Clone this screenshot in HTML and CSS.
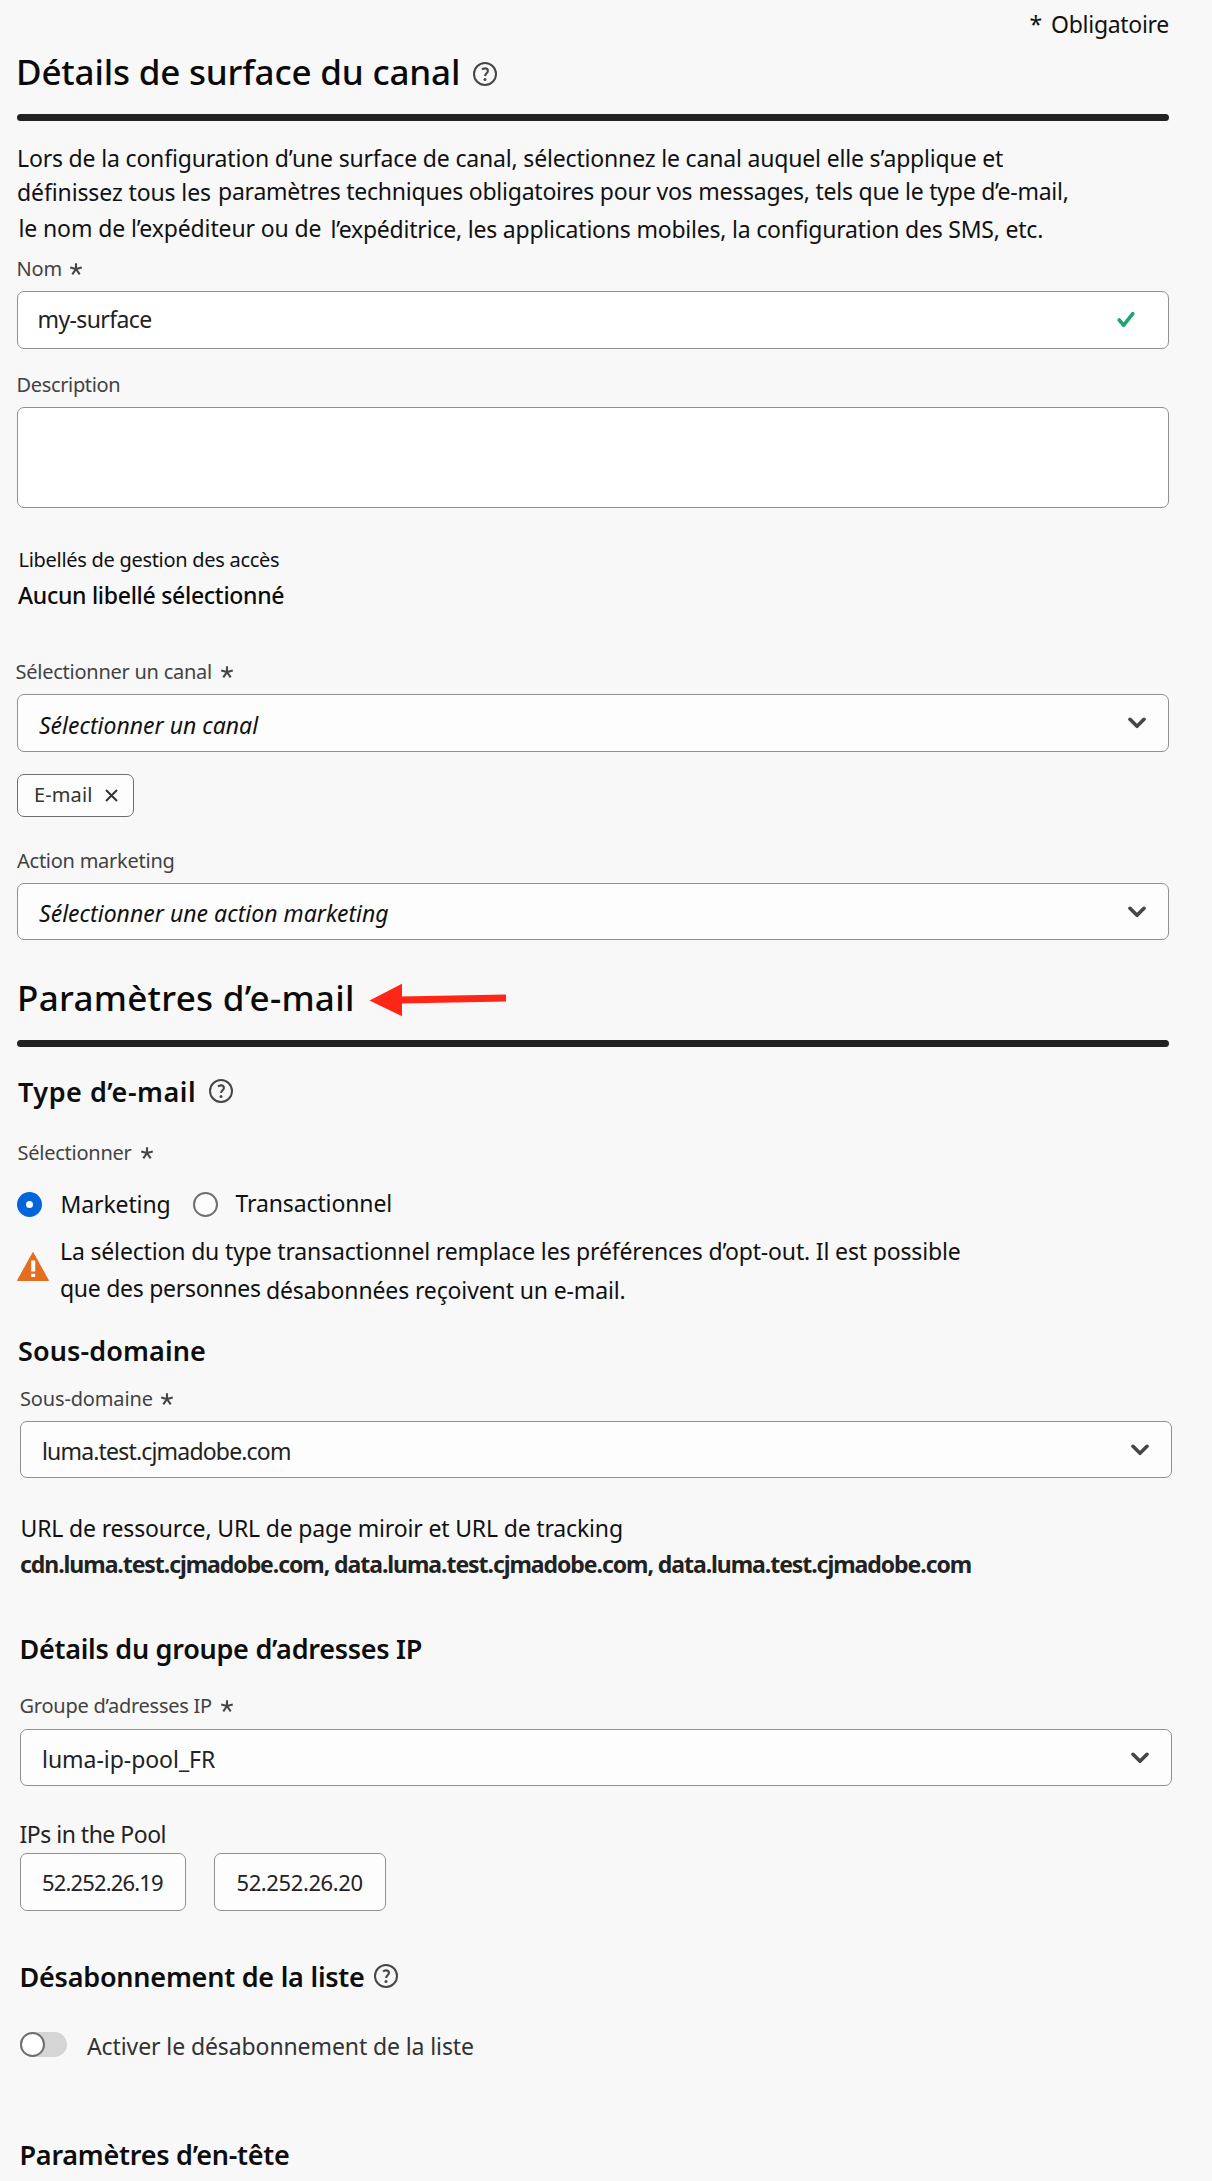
FILE: index.html
```html
<!DOCTYPE html>
<html lang="fr">
<head>
<meta charset="utf-8">
<title>Détails de surface du canal</title>
<link rel="stylesheet" href="styles.css">
</head>
<body>
<svg class="defs" aria-hidden="true">
  <symbol id="star" viewBox="0 0 12 12"><path d="M6 6V0.2M6 6L11.8 4.4M6 6L9.7 11.4M6 6L2.3 11.4M6 6L0.2 4.4" fill="none" stroke="currentColor" stroke-width="2.1"/></symbol>
  <symbol id="help" viewBox="0 0 24 24"><circle cx="12" cy="12" r="11" fill="none" stroke="currentColor" stroke-width="2"/><path d="M9 7.6C9.8 6.8 10.8 6.4 12 6.4c1.8 0 2.9 1 2.9 2.5 0 2.3-2.8 2.4-2.8 5.2" fill="none" stroke="currentColor" stroke-width="2.1"/><circle cx="12" cy="17.5" r="1.5" fill="currentColor"/></symbol>
  <symbol id="chevron" viewBox="0 0 18 12"><path d="M2 2.3L9 9.3L16 2.3" fill="none" stroke="currentColor" stroke-width="3.6" stroke-linecap="round" stroke-linejoin="round"/></symbol>
</svg>
<main class="form">
  <div class="required"><span>*</span><span class="required-text">Obligatoire</span></div>

  <section>
    <h1 class="title title-surface">Détails de surface du canal<svg class="help"><use href="#help"/></svg></h1>
    <div class="rule"></div>
    <div class="intro">
      <p class="line line-1">Lors de la configuration d’une surface de canal, sélectionnez le canal auquel elle s’applique et</p>
      <p class="line line-2"><span class="seg-a">définissez tous les</span><span class="seg-b">paramètres techniques obligatoires pour vos messages, tels que le type d’e-mail,</span></p>
      <p class="line line-3"><span class="seg-a">le nom de l’expéditeur ou de</span><span class="seg-b">l’expéditrice, les applications mobiles, la configuration des SMS, etc.</span></p>
    </div>

    <div class="label label-name">Nom<svg class="star"><use href="#star"/></svg></div>
    <div class="field field-name"><span class="value value-name">my-surface</span>
      <svg class="check" viewBox="0 0 18 17"><path d="M2.2 9L6.7 14.2L15.8 2.6" fill="none" stroke="#1ba672" stroke-width="3.6" stroke-linecap="round" stroke-linejoin="round"/></svg>
    </div>

    <div class="label label-description">Description</div>
    <div class="field area"></div>

    <div class="access-label">Libellés de gestion des accès</div>
    <div class="access-value">Aucun libellé sélectionné</div>

    <div class="label label-channel">Sélectionner un canal<svg class="star"><use href="#star"/></svg></div>
    <div class="field select select-channel"><span class="value placeholder">Sélectionner un canal</span><svg class="chevron"><use href="#chevron"/></svg></div>
    <div class="tag">E-mail<svg class="cross" viewBox="0 0 13 13"><path d="M1 1L12 12M12 1L1 12" stroke="currentColor" stroke-width="2"/></svg></div>

    <div class="label label-action">Action marketing</div>
    <div class="field select"><span class="value placeholder placeholder-action">Sélectionner une action marketing</span><svg class="chevron"><use href="#chevron"/></svg></div>
  </section>

  <section>
    <h1 class="title title-email">Paramètres d’e-mail
      <svg class="arrow" viewBox="0 0 138 34"><path d="M0.5 17.5L33 0.8V33.2Z" fill="#ff2617"/><path d="M31 17L137 15" stroke="#ff2617" stroke-width="6.8"/></svg>
    </h1>
    <div class="rule"></div>

    <h2 class="heading heading-type">Type d’e-mail<svg class="help"><use href="#help"/></svg></h2>
    <div class="label label-select">Sélectionner<svg class="star"><use href="#star"/></svg></div>
    <div class="radios">
      <span class="radio radio-on"></span><span class="radio-text">Marketing</span>
      <span class="radio"></span><span class="radio-text radio-text-last">Transactionnel</span>
    </div>
    <div class="warning">
      <svg class="warning-icon" viewBox="0 0 32 29"><path d="M16 0.5L31.5 28.5H0.5Z" fill="#e56d1f" stroke="#e56d1f" stroke-linejoin="round"/><path d="M14.2 8.5h4v11h-4zM14.2 21.7h4v3.4h-4z" fill="#fff"/></svg>
      <div class="warning-text">
        <p class="line warn-1">La sélection du type transactionnel remplace les préférences d’opt-out. Il est possible</p>
        <p class="line warn-2"><span class="seg-a">que des personnes</span><span class="seg-b">désabonnées reçoivent un e-mail.</span></p>
      </div>
    </div>

    <h2 class="heading heading-domain">Sous-domaine</h2>
  </section>

  <section class="lower">
    <div class="label label-domain">Sous-domaine<svg class="star"><use href="#star"/></svg></div>
    <div class="field select"><span class="value value-domain">luma.test.cjmadobe.com</span><svg class="chevron"><use href="#chevron"/></svg></div>
    <div class="line url-label">URL de ressource, URL de page miroir et URL de tracking</div>
    <div class="line url-value">cdn.luma.test.cjmadobe.com, data.luma.test.cjmadobe.com, data.luma.test.cjmadobe.com</div>

    <h2 class="heading heading-pool">Détails du groupe d’adresses IP</h2>
    <div class="label label-pool">Groupe d’adresses IP<svg class="star"><use href="#star"/></svg></div>
    <div class="field select"><span class="value value-pool">luma-ip-pool_FR</span><svg class="chevron"><use href="#chevron"/></svg></div>
    <div class="line ips-label">IPs in the Pool</div>
    <div class="ips"><span class="field ip ip-1">52.252.26.19</span><span class="field ip ip-2">52.252.26.20</span></div>

    <h2 class="heading heading-unsub">Désabonnement de la liste<svg class="help"><use href="#help"/></svg></h2>
    <div class="toggle-row"><span class="toggle"><span class="knob"></span></span><span class="toggle-text">Activer le désabonnement de la liste</span></div>
    <h2 class="heading heading-header">Paramètres d’en-tête</h2>
  </section>
</main>
</body>
</html>
```
FILE: styles.css
```css
* { box-sizing: border-box; margin: 0; }
body {
  background: #f8f8f8;
  color: #111;
  font: 400 23px/30px "Noto Sans", "Open Sans", sans-serif;
  white-space: nowrap;
}
svg { flex: none; display: block; }
.defs { position: absolute; width: 0; height: 0; }
.form { width: 1169px; padding: 9px 0 0 17px; }
.lower { width: 1152px; margin-left: 3px; }

.required { display: flex; justify-content: flex-end; gap: 9px; }
.required-text { letter-spacing: -0.3px; }

.title {
  display: flex; align-items: center;
  height: 44px; font-size: 35px; line-height: 44px; font-weight: 500; color: #0a0a0a;
}
.title-surface { margin: 11px 0 20px -1px; letter-spacing: -0.18px; }
.title-surface .help { margin: 3px 0 0 13px; }
.title-email { margin: 36px 0 20px; letter-spacing: 0.3px; }
.arrow { width: 138px; height: 34px; margin: 4px 0 0 14px; }
.rule { height: 7px; border-radius: 3.5px; background: #222; }

.help { width: 24px; height: 24px; color: #464646; }
.star { width: 12px; height: 12px; color: #464646; margin-left: 9px; }
.chevron { width: 18px; height: 12px; color: #464646; }

.line { height: 30px; display: flex; align-items: flex-start; }
.intro { margin-top: 22px; }
.line-1 { letter-spacing: -0.17px; }
.line-2 { margin-top: 3px; letter-spacing: -0.23px; }
.line-2 .seg-a { width: 201px; padding-top: 1px; letter-spacing: -0.11px; }
.line-3 { margin: 7px 0 0 1.5px; letter-spacing: -0.21px; }
.line-3 .seg-a { width: 312px; letter-spacing: -0.12px; }
.line-3 .seg-b { padding-top: 1px; }

.label {
  display: flex; align-items: center;
  height: 26px; font-size: 20px; line-height: 26px; letter-spacing: -0.25px; color: #424242;
}
.label-name { margin: 13px 0 9px -0.5px; letter-spacing: -0.2px; }
.label-name .star { margin: 0 0 1px 8px; }
.label-description { margin: 23px 0 9px -0.5px; letter-spacing: -0.35px; }
.label-channel { margin: 48px 0 9px -1.5px; }
.label-action { margin: 31px 0 9px; }
.label-select { margin: 31px 0 23px 0.5px; }
.label-domain { margin: 18px 0 9px; letter-spacing: -0.15px; }
.label-domain .star { margin: 0 0 1px 8px; }
.label-pool { margin: 26px 0 10px -0.5px; }
.label-pool .star { margin-left: 9px; }

.field {
  display: flex; align-items: center; justify-content: space-between;
  border: 1px solid #909090; border-radius: 7px; background: #fff; color: #222;
}
.field-name { height: 58px; padding: 0 33px 2px 19.5px; }
.area { height: 101px; }
.select { height: 57px; padding: 0 22px 0 21px; background: #fdfdfd; }
.select .value { padding-top: 3px; }
.select-channel { height: 58px; }
.select-channel .chevron { margin-bottom: 1px; }
.value-name { letter-spacing: -0.62px; }
.check { width: 18px; height: 17px; }
.placeholder { font-style: italic; color: #111; letter-spacing: 0; }
.placeholder-action { letter-spacing: 0.02px; }
.value-domain { letter-spacing: -0.82px; }
.value-pool { letter-spacing: -0.04px; }

.access-label { margin-top: 39px; margin-left: 1.5px; font-size: 20px; line-height: 26px; letter-spacing: -0.29px; }
.access-value { margin: 7px 0 0 1px; font-weight: 500; letter-spacing: -0.28px; color: #0a0a0a; }
.access-value + .label { margin-top: 49px; }

.tag {
  display: flex; align-items: center; gap: 13px;
  width: 117px; height: 43px; margin-top: 22px; padding: 0 0 1px 16px;
  border: 1px solid #6e6e6e; border-radius: 7px; background: #fdfdfd;
  font-size: 20px; letter-spacing: 0.1px; color: #333;
}
.cross { width: 13px; height: 13px; }

.heading {
  display: flex; align-items: center;
  height: 36px; font-size: 27px; line-height: 36px; font-weight: 600; letter-spacing: -0.23px; color: #0e0e0e;
}
.heading-type { margin: 27px 0 -1px 1px; letter-spacing: 0.51px; }
.heading-type .help { margin: 0 0 2px 13px; }
.heading-domain { margin: 30px 0 -1px 1px; letter-spacing: 0.11px; }
.heading-pool { margin: 52px 0 0 -0.5px; letter-spacing: -0.27px; }
.heading-unsub { margin: 48px 0 -1px -0.5px; letter-spacing: -0.23px; }
.heading-unsub .help { margin: 0 0 3px 9px; }
.heading-header { margin: 76px 0 0 -0.5px; letter-spacing: -0.26px; }

.radios { display: flex; align-items: center; height: 30px; letter-spacing: -0.12px; }
.radio { width: 25px; height: 25px; border: 2.5px solid #6e6e6e; border-radius: 50%; background: #fdfdfd; }
.radio-on { border: 9px solid #0265dc; }
.radio-text { width: 132.5px; margin-left: 18.5px; }
.radio-text-last { margin-left: 17.5px; padding-bottom: 2px; }

.warning { display: flex; margin-top: 17px; }
.warning-icon { width: 32px; height: 29px; margin: 16px 11px 0 0; }
.warn-1 { letter-spacing: -0.16px; }
.warn-2 { margin-top: 7px; letter-spacing: -0.13px; }
.warn-2 .seg-a { width: 206px; letter-spacing: -0.28px; }
.warn-2 .seg-b { padding-top: 2px; }

.url-label { margin: 35px 0 0 0.5px; letter-spacing: -0.16px; }
.url-value { margin: 6px 0 0; font-weight: 700; letter-spacing: -1.06px; color: #222; }

.ips-label { margin: 33px 0 4px -0.5px; letter-spacing: -0.5px; color: #222; }
.ips { display: flex; gap: 28px; }
.ip { height: 58px; width: 166px; padding-left: 21px; background: #fdfdfd; font-size: 22px; letter-spacing: -0.85px; }
.ip-2 { width: 172px; padding-left: 21.5px; letter-spacing: -0.4px; }

.toggle-row { display: flex; align-items: center; gap: 20px; height: 30px; margin-top: 37px; color: #333; letter-spacing: -0.1px; }
.toggle { display: flex; width: 47px; height: 25px; margin-bottom: 3px; border-radius: 13px; background: #d5d5d5; }
.knob { width: 25px; height: 25px; border: 2.5px solid #6e6e6e; border-radius: 50%; background: #fff; }
```
